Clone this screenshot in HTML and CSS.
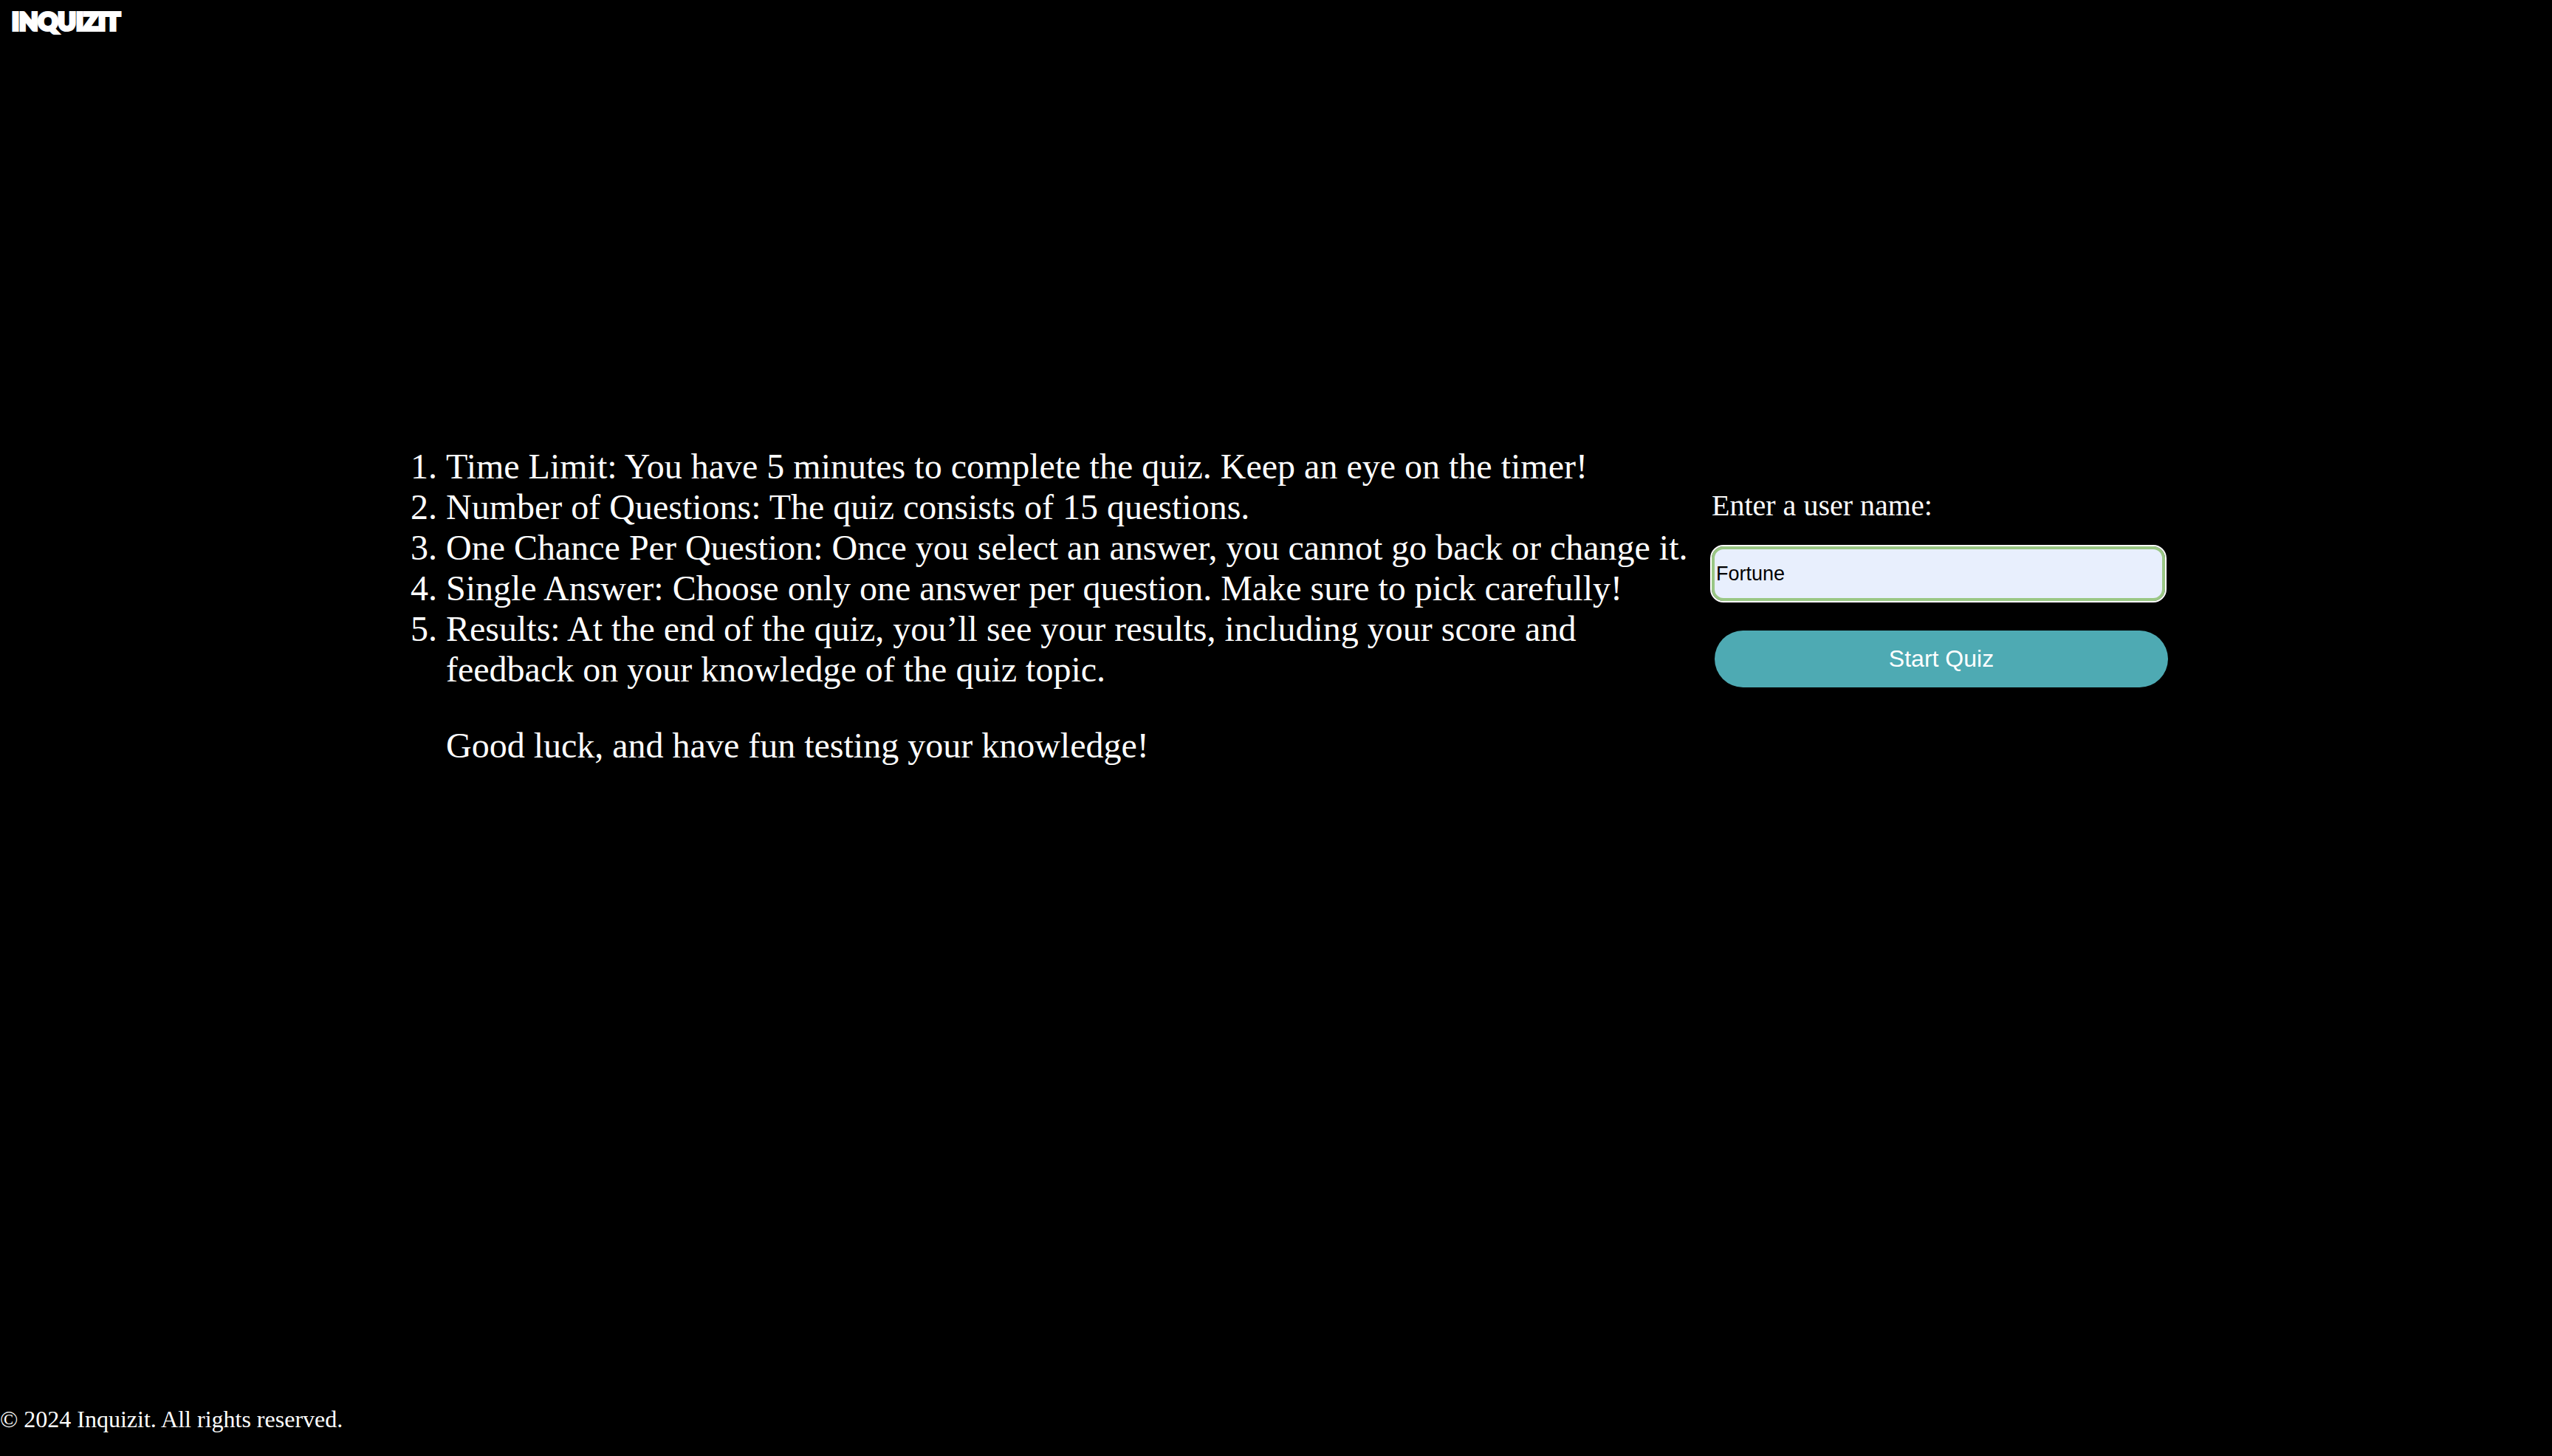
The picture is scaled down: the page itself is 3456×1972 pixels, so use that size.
FILE: index.html
```html
<!DOCTYPE html>
<html lang="en">
<head>
  <meta charset="utf-8">
  <meta name="viewport" content="width=device-width, initial-scale=1">
  <title>Inquizit</title>
  <link rel="stylesheet" href="styles.css">
</head>
<body>
  <header class="header">
    <span class="logo">INQUIZIT</span>
  </header>
  <main class="main">
    <ol class="rules">
      <li>Time Limit: You have 5 minutes to complete the quiz. Keep an eye on the timer!</li>
      <li>Number of Questions: The quiz consists of 15 questions.</li>
      <li>One Chance Per Question: Once you select an answer, you cannot go back or change it.</li>
      <li>Single Answer: Choose only one answer per question. Make sure to pick carefully!</li>
      <li>Results: At the end of the quiz, you’ll see your results, including your score and feedback on your knowledge of the quiz topic.
        <p class="luck">Good luck, and have fun testing your knowledge!</p>
      </li>
    </ol>
    <form class="form">
      <label class="label" for="username">Enter a user name:</label>
      <input class="input" id="username" name="username" type="text" value="Fortune">
      <button class="button" type="button">Start Quiz</button>
    </form>
  </main>
  <footer class="footer">© 2024 Inquizit. All rights reserved.</footer>
</body>
</html>
```
FILE: styles.css
```css
* {
  box-sizing: border-box;
}

body {
  display: flex;
  flex-direction: column;
  min-height: 100vh;
  margin: 0;
  background: #000;
  color: #fff;
  font-family: "Liberation Serif", "Times New Roman", serif;
}

.header {
  padding: 8px 16px;
}

.logo {
  display: block;
  font-family: Lato, sans-serif;
  font-size: 33px;
  font-weight: 900;
  line-height: 40px;
  -webkit-text-stroke: 4px #fff;
}

.main {
  display: flex;
  flex: 1;
  justify-content: center;
  align-items: flex-start;
  gap: 32px;
  padding-top: 548px;
}

.rules {
  width: 1766px;
  margin: 0;
  padding-left: 84px;
  font-size: 48px;
  line-height: 55px;
}

.luck {
  margin: 48px 0 0;
}

.form {
  display: flex;
  flex-direction: column;
  width: 618px;
  padding-top: 58px;
}

.label {
  margin-bottom: 32px;
  font-size: 40px;
  line-height: 46px;
}

.input {
  height: 74px;
  margin: 0 4px 40px 0;
  padding: 0 2px;
  border: 4px solid #9ac785;
  border-radius: 16px;
  outline: 2px solid #fff;
  background: #e8effd;
  color: #000;
  font-family: "Liberation Sans", Arial, sans-serif;
  font-size: 27px;
}

.button {
  height: 77px;
  margin-left: 4px;
  padding: 0;
  border: 0;
  border-radius: 40px;
  background: #4eaab3;
  color: #fff;
  font-family: "Liberation Sans", Arial, sans-serif;
  font-size: 32px;
}

.footer {
  padding-bottom: 32px;
  font-size: 32px;
  line-height: 36px;
}
```
